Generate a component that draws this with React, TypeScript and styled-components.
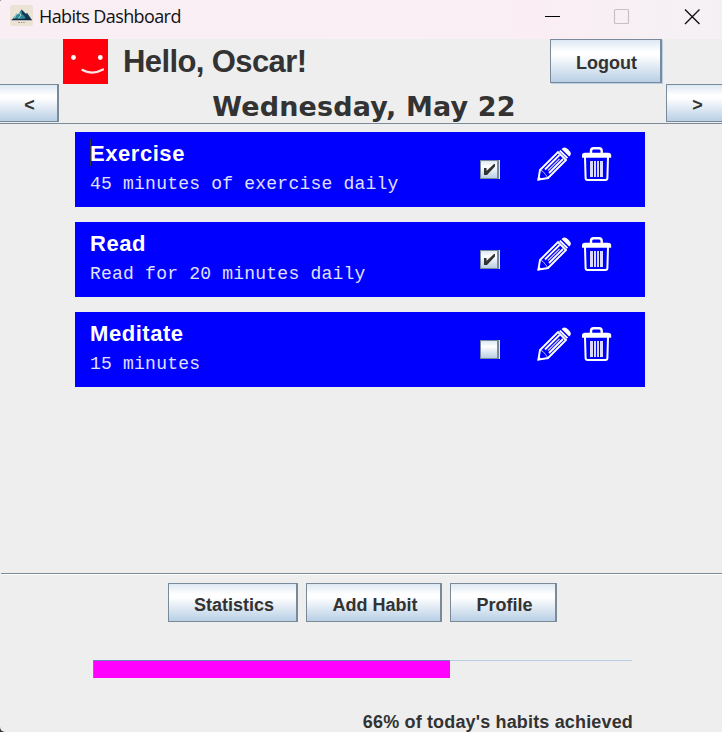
import React from 'react';
import styled, { createGlobalStyle } from 'styled-components';

const GlobalStyle = createGlobalStyle`
  * { box-sizing: border-box; }
  body { margin: 0; background: #333; overflow: hidden; }
`;

const Window = styled.div`
  width: 722px;
  height: 732px;
  display: flex;
  flex-direction: column;
  background: #eee;
  color: #333;
  font-family: 'Liberation Sans', Arial, sans-serif;
  overflow: hidden;
  white-space: nowrap;
  border-radius: 2px 0 0 5px;
`;

const TitleBar = styled.header`
  height: 39px;
  flex: none;
  display: flex;
  align-items: flex-start;
  background: linear-gradient(90deg, #f8eef4 0%, #f9eff4 55%, #faeef4 75%, #f4f1f5 100%);
`;

const AppIcon = styled.svg`
  margin: 5px 6px 0 10px;
  flex: none;
`;

const Title = styled.span`
  flex: 1;
  font: 18px/33px 'Open Sans', sans-serif;
  letter-spacing: -0.6px;
  color: #111;
`;

const WindowControls = styled.svg`
  flex: none;
`;

const Greeting = styled.div`
  height: 45px;
  flex: none;
  display: flex;
  padding: 0 60px 0 63px;
`;

const Hello = styled.h1`
  flex: 1;
  margin: 0 0 0 15px;
  font-size: 31px;
  line-height: 46px;
  letter-spacing: -0.6px;
`;

const SwingButton = styled.button<{ $width: number; $height: number; $shadow?: boolean }>`
  width: ${p => p.$width}px;
  height: ${p => p.$height}px;
  flex: none;
  padding: 4px 0 0 2px;
  border: 1px solid #7a8a99;
  border-right-width: 2px;
  background: linear-gradient(#dde8f3 0%, #fff 28%, #fff 36%, #b8cfe5 100%);
  box-shadow: ${p => (p.$shadow ? '1px 1px 0 #b8cfe5' : 'none')};
  color: #333;
  font: bold 18px 'Liberation Sans', Arial, sans-serif;
`;

const ActionButton = styled(SwingButton)`
  padding-top: 6px;
  padding-left: 3px;
`;

const DateBar = styled.nav`
  height: 40px;
  flex: none;
  display: flex;
  justify-content: space-between;
  border-bottom: 1px solid #7a8a99;
`;

const EdgeButton = styled(SwingButton)<{ $side: 'left' | 'right' }>`
  border-left-width: ${p => (p.$side === 'left' ? 0 : 1)}px;
  border-right-width: ${p => (p.$side === 'right' ? 0 : 2)}px;
  padding-left: ${p => (p.$side === 'right' ? 6 : 2)}px;
`;

const DateLabel = styled.h2`
  margin: 0;
  padding-left: 3px;
  font: bold 27px/45px 'DejaVu Sans', Verdana, sans-serif;
  letter-spacing: 0.15px;
`;

const HabitList = styled.main`
  height: 449px;
  flex: none;
  display: flex;
  flex-direction: column;
  gap: 15px;
  padding: 8px 77px 0 75px;
`;

const HabitCard = styled.article`
  height: 75px;
  display: flex;
  background: #00f;
  color: #fff;
`;

const HabitText = styled.div`
  width: 405px;
  padding: 7px 0 0 15px;
`;

const HabitName = styled.h3<{ $focused: boolean }>`
  margin: 0;
  height: 27px;
  font-size: 22px;
  line-height: 29px;
  letter-spacing: 0.55px;
  background: ${p => (p.$focused ? 'linear-gradient(#333, #333) 0 0 / 1px 27px no-repeat' : 'none')};
`;

const HabitNote = styled.p`
  margin: 6px 0 0;
  font: 18px/24px 'Liberation Mono', 'Courier New', monospace;
  letter-spacing: 0.22px;
  color: #e0e0ff;
`;

const CheckBox = styled.svg`
  margin: 28px 37px 0 0;
  flex: none;
`;

const Icon = styled.svg<{ $gap?: number }>`
  margin: 15px ${p => p.$gap ?? 0}px 0 0;
  flex: none;
`;

const Actions = styled.div`
  height: 49px;
  flex: none;
  display: flex;
  gap: 8px;
  margin-left: 1px;
  padding: 9px 0 0 167px;
  border-top: 1px solid #7a8a99;
  box-shadow: inset 0 1px 0 #fff;
`;

const Progress = styled.div`
  width: 539px;
  height: 18px;
  flex: none;
  margin: 38px 0 0 93px;
  border-top: 1px solid #b8cfe5;
`;

const ProgressFill = styled.div`
  height: 18px;
  margin-top: -1px;
  background: #f0f;
  border-top: 1px solid #6382bf;
  border-left: 1px solid #6382bf;
`;

const Summary = styled.p`
  margin: 33px 89px 0 0;
  text-align: right;
  font-weight: bold;
  font-size: 18px;
  line-height: 22px;
  letter-spacing: 0.16px;
`;

const Avatar = () => (
  <svg width="45" height="45" viewBox="0 0 45 45">
    <rect width="45" height="45" fill="#ff000c" />
    <g fill="#fff">
      <circle cx="10.5" cy="18.5" r="2.4" />
      <circle cx="37.3" cy="18.5" r="2.4" />
    </g>
    <path d="M19.5 31 Q29 36.5 40 30.5" fill="none" stroke="#fff" strokeWidth="2.2" strokeLinecap="round" opacity=".9" />
  </svg>
);

const Mountain = () => (
  <AppIcon width="23" height="21" viewBox="0 0 23 21">
    <rect width="23" height="21" rx="2.5" fill="#ece3d5" />
    <path d="M2 14.5 L6.5 8.5 L8 9.5 L11.5 4.5 L16 9 L17 8 L21.5 14.5Z" fill="#2c8b99" />
    <path d="M11.5 4.5 L12 9 L14.5 11 L16 14.5 H21.5 L17 8 L16 9Z" fill="#183750" />
    <path d="M9.5 8 L11 10 L8 14 M6.5 9 L4.5 13" stroke="#dfe9e5" fill="none" strokeWidth=".8" />
    <path d="M1.5 14.5 Q7 12.8 11 14 Q16 12.8 22 14.5 V15.2 H1.5Z" fill="#142941" />
    <path d="M8 17.5h2m1 0h1.5m.8 0h1.5" stroke="#8e8981" strokeWidth=".8" />
  </AppIcon>
);

const Pencil = () => (
  <Icon width="34" height="34" viewBox="0 0 34 34" $gap={11} fill="none" stroke="#fff">
    <path d="M1.4 32.6 L3 23 L21 5 L29 13 L11 31Z" strokeWidth="1.9" />
    <path d="M3 23 L6 24.5 L8.5 27.5 L11 31" strokeWidth="1" opacity=".7" />
    <path d="M8 22.5 L22.5 8 M12 26 L26 12" strokeWidth="1.8" />
    <path d="M11 23.5 L22.5 12" strokeWidth="1.4" opacity=".75" />
    <path d="M22.8 3.6 L30.4 11.2" strokeWidth="1.9" />
    <path d="M25.2 1.4 Q28 -1 31.2 2.5 Q35.5 6.5 32.9 8.8 L32.2 9.5 L24.5 2Z" fill="#fff" stroke="none" />
    <path d="M.5 33.5 L1.5 29 L5 32.5Z" fill="#fff" stroke="none" />
  </Icon>
);

const Trash = () => (
  <Icon width="30" height="34" viewBox="0 0 30 34" fill="none" stroke="#fff">
    <path d="M9 6.5 V4 Q9 1.3 11.5 1.3 H17.2 Q19.7 1.3 19.7 4 V6.5" strokeWidth="2.4" />
    <path d="M0 10.8 V8.5 Q0 5.8 3 5.8 H26 Q29.2 5.8 29.2 8.5 V10.8Z" fill="#fff" stroke="none" />
    <path d="M3 10 L3.6 31 Q3.6 32.9 5.6 32.9 H23.4 Q25.4 32.9 25.4 31 L26 10" strokeWidth="2" />
    <path d="M8 14h3v16h-3zM12 14h2v16h-2zM15 14h2v16h-2zM18 14h3v16h-3z" fill="#d8d8ff" stroke="none" />
  </Icon>
);

const Tick = ({ checked }: { checked: boolean }) => (
  <CheckBox width="20" height="19" viewBox="0 0 20 19" shapeRendering="crispEdges">
    <defs>
      <linearGradient id="boxFace" x2="0" y2="1">
        <stop offset="0" stopColor="#dde8f3" />
        <stop offset=".32" stopColor="#fff" />
        <stop offset="1" stopColor="#b8cfe5" />
      </linearGradient>
    </defs>
    <path fill="#dce8f3" d="M0 0h20v19H0z" />
    <path fill="#7a8a99" d="M0 0h19v19H0z" />
    <path fill="url(#boxFace)" d="M1 1h16v17H1z" />
    {checked && (
      <path d="M4 8H6.5V11L14 4H15V6.5L7 15H4Z" fill="#333" shapeRendering="auto" />
    )}
  </CheckBox>
);

const habits = [
  { name: 'Exercise', note: '45 minutes of exercise daily', done: true },
  { name: 'Read', note: 'Read for 20 minutes daily', done: true },
  { name: 'Meditate', note: '15 minutes', done: false },
];

export default function App() {
  return (
    <Window>
      <GlobalStyle />
      <TitleBar>
        <Mountain />
        <Title>Habits Dashboard</Title>
        <WindowControls width="182" height="33" viewBox="540 0 182 33" fill="none">
          <path d="M545 16.5h15" stroke="#000" />
          <rect x="614.5" y="9.5" width="14" height="14" rx="1" stroke="#c5c0c4" strokeWidth="1.2" />
          <path d="M685 9.5l14.5 14.5M699.5 9.5L685 24" stroke="#111" strokeWidth="1.4" />
        </WindowControls>
      </TitleBar>
      <Greeting>
        <Avatar />
        <Hello>Hello, Oscar!</Hello>
        <SwingButton $width={112} $height={44} $shadow>Logout</SwingButton>
      </Greeting>
      <DateBar>
        <EdgeButton $side="left" $width={59} $height={38}>&lt;</EdgeButton>
        <DateLabel>Wednesday, May 22</DateLabel>
        <EdgeButton $side="right" $width={56} $height={38}>&gt;</EdgeButton>
      </DateBar>
      <HabitList>
        {habits.map((h, i) => (
          <HabitCard key={h.name}>
            <HabitText>
              <HabitName $focused={i === 0}>{h.name}</HabitName>
              <HabitNote>{h.note}</HabitNote>
            </HabitText>
            <Tick checked={h.done} />
            <Pencil />
            <Trash />
          </HabitCard>
        ))}
      </HabitList>
      <Actions>
        <ActionButton $width={130} $height={39}>Statistics</ActionButton>
        <ActionButton $width={136} $height={39}>Add Habit</ActionButton>
        <ActionButton $width={107} $height={39}>Profile</ActionButton>
      </Actions>
      <Progress>
        <ProgressFill style={{ width: 357 }} />
      </Progress>
      <Summary>66% of today's habits achieved</Summary>
    </Window>
  );
}
